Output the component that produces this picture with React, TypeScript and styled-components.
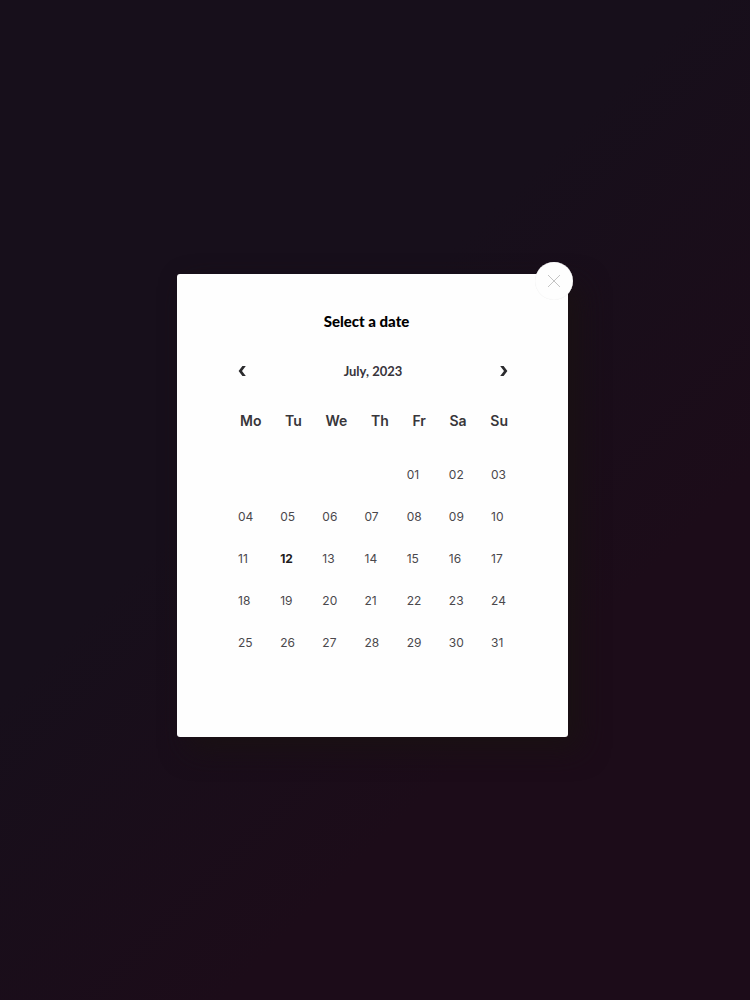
import React, { useState } from "react";
import styled, { createGlobalStyle } from "styled-components";

const weekdays = ["Mo", "Tu", "We", "Th", "Fr", "Sa", "Su"];

const firstColumn = 4;

const cells: (number | null)[] = [
  ...Array(firstColumn).fill(null),
  ...Array.from({ length: 31 }, (_, i) => i + 1),
];

const weeks = [0, 1, 2, 3, 4].map((w) => cells.slice(w * 7, w * 7 + 7));

export default function App() {
  const [selected, setSelected] = useState(12);

  return (
    <>
      <GlobalStyle />
      <Page>
        <Card aria-labelledby="picker-title">
          <CloseButton type="button" aria-label="Close">
            <svg width="14" height="14" viewBox="0 0 14 14" fill="none">
              <path d="M1 1L13 13M13 1L1 13" stroke="#c4c4c4" strokeWidth="1" />
            </svg>
          </CloseButton>
          <Title id="picker-title">Select a date</Title>
          <MonthBar>
            <ArrowButton type="button" aria-label="Previous month">
              <svg width="8" height="10" viewBox="0 0 8 10">
                <path d="M4.4 0H7.8L4 5L7.8 10H4.4L0.6 5Z" fill="#2b2b2e" />
              </svg>
            </ArrowButton>
            <Month>July, 2023</Month>
            <ArrowButton type="button" aria-label="Next month">
              <svg width="8" height="10" viewBox="0 0 8 10">
                <path d="M3.6 0H0.2L4 5L0.2 10H3.6L7.4 5Z" fill="#2b2b2e" />
              </svg>
            </ArrowButton>
          </MonthBar>
          <Calendar>
            <thead>
              <WeekdayRow>
                {weekdays.map((name) => (
                  <th key={name} scope="col">
                    {name}
                  </th>
                ))}
              </WeekdayRow>
            </thead>
            <tbody>
              {weeks.map((week, i) => (
                <WeekRow key={i}>
                  {week.map((day, j) => (
                    <td key={j}>
                      {day && (
                        <Day
                          type="button"
                          $selected={day === selected}
                          aria-pressed={day === selected}
                          onClick={() => setSelected(day)}
                        >
                          {String(day).padStart(2, "0")}
                        </Day>
                      )}
                    </td>
                  ))}
                </WeekRow>
              ))}
            </tbody>
          </Calendar>
        </Card>
      </Page>
    </>
  );
}

const GlobalStyle = createGlobalStyle`
  * {
    box-sizing: border-box;
  }

  body {
    margin: 0;
    background: #190e1a;
  }

  button {
    padding: 0;
    border: 0;
    background: none;
    cursor: pointer;
  }
`;

const Page = styled.main`
  min-height: 100vh;
  display: flex;
  align-items: center;
  justify-content: center;
  padding: 11px 5px 0 0;
  background: linear-gradient(135deg, #170f1b 40%, #1c0c19 70%);
`;

const Card = styled.section`
  position: relative;
  width: 100%;
  max-width: 391px;
  padding: 37px 60px 74px;
  background: #fefefe;
  border-radius: 3px;
  box-shadow: 12px 12px 28px #1a1113;
`;

const CloseButton = styled.button`
  position: absolute;
  top: -12px;
  right: -5px;
  width: 38px;
  height: 38px;
  display: flex;
  align-items: center;
  justify-content: center;
  background: #fefefe;
  border-radius: 50%;
  box-shadow: inset 0 0 1px #e4e4e4;
`;

const Title = styled.h1`
  margin: 0;
  padding-right: 12px;
  font-family: Lato, sans-serif;
  font-size: 15px;
  font-weight: 900;
  line-height: 20px;
  text-align: center;
  color: #000;
`;

const MonthBar = styled.div`
  display: flex;
  align-items: center;
  justify-content: space-between;
  margin-top: 30px;
  padding-left: 1px;
`;

const ArrowButton = styled.button`
  display: flex;
`;

const Month = styled.h2`
  margin: 0;
  font-family: Lato, sans-serif;
  font-size: 13px;
  font-weight: 700;
  line-height: 20px;
  color: #38343b;
`;

const Calendar = styled.table`
  display: block;
  margin-top: 30px;
  font-family: Inter, sans-serif;

  thead,
  tbody {
    display: block;
  }
`;

const WeekdayRow = styled.tr`
  display: flex;
  justify-content: space-between;
  padding-left: 3px;
  margin-bottom: 22px;

  th {
    padding: 0;
    font-size: 14px;
    font-weight: 600;
    line-height: 20px;
    color: #38363a;
  }
`;

const WeekRow = styled.tr`
  display: grid;
  grid-template-columns: repeat(6, 1fr) 17px;
  height: 42px;
  padding-left: 1px;
  align-items: center;

  td {
    padding: 0;
    line-height: 20px;
  }
`;

const Day = styled.button<{ $selected: boolean }>`
  font-family: Inter, sans-serif;
  font-size: 12px;
  line-height: 20px;
  font-weight: ${({ $selected }) => ($selected ? 700 : 400)};
  color: ${({ $selected }) => ($selected ? "#1e1c20" : "#4a484c")};
`;
